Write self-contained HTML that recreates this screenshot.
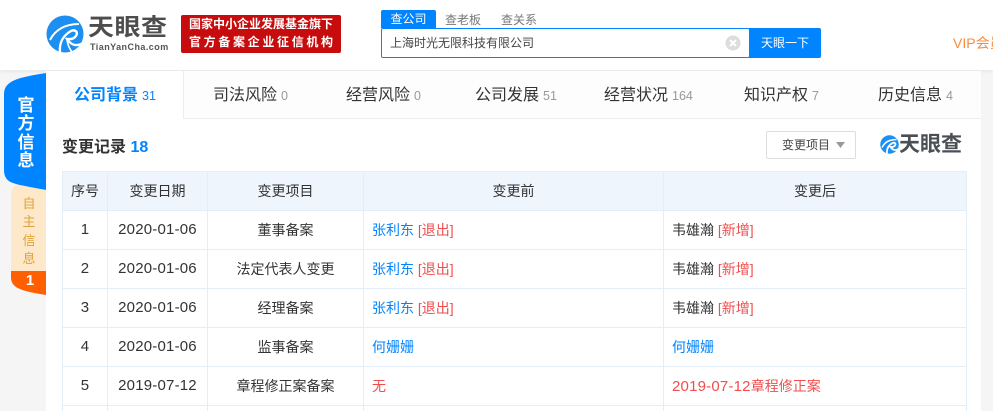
<!DOCTYPE html>
<html lang="zh">
<head>
<meta charset="utf-8">
<title>天眼查</title>
<style>
html,body{margin:0;padding:0;width:993px;height:411px;overflow:hidden}
body{background:#f5f5f5;font-family:"Liberation Sans","Noto Sans CJK SC",sans-serif;color:#333}
#page{position:absolute;left:0;top:0;width:993px;height:411px;overflow:hidden;background:#f5f5f5}
.a{position:absolute;white-space:nowrap}
#hd{left:0;top:0;width:993px;height:70px;background:#fff;box-shadow:0 1px 4px rgba(0,0,0,.08)}
#main{left:46px;top:71px;width:935px;height:340px;background:#fff}
.tab{top:73px;height:46px;line-height:46px;font-size:16px;color:#333}
.tab i{font-style:normal;font-size:12.500px;color:#999;margin-left:4px}
table{position:absolute;left:62px;top:171px;width:904px;border-collapse:collapse;table-layout:fixed;font-size:14px;color:#333}
td,th{border:1px solid #e4eef8;height:38px;padding:0;text-align:center;font-weight:normal;line-height:20px}
th{background:#eef5fd}
td.l{text-align:left;padding-left:8px}
.d{font-size:15px;letter-spacing:.2px}
.b{color:#0084ff;font-size:14px;letter-spacing:0}
.r{color:#f04d4d;font-size:14px;letter-spacing:0}
.rd{color:#f04d4d;font-size:15px;letter-spacing:.2px}
.rd span{font-size:14px;letter-spacing:0}
.v{position:absolute;top:406px;width:1px;height:5px;background:#e4eef8}
</style>
</head>
<body>
<div id="page">
<div class="a" id="hd"></div>
<svg class="a" style="left:46px;top:15px" width="38" height="38" viewBox="0 0 38 38">
<circle cx="19" cy="19" r="18.500" fill="#1c8ff0"/>
<path d="M4 25C9 15 19 9 33 9" fill="none" stroke="#fff" stroke-width="2"/>
<path d="M14 37C13 27 18 20 25 16C30 14 33 18 29 22C26 25 23 24 21 24C25 30 30 32 37 28" fill="none" stroke="#fff" stroke-width="2.400"/>
<path d="M21 25C22 31 24 35 27 38" fill="none" stroke="#fff" stroke-width="1.600"/>
</svg>
<div class="a" style="left:88px;top:13px;font-size:26px;line-height:28px;color:#4d4d4d;font-weight:bold;letter-spacing:.5px;transform:scaleY(.9);transform-origin:0 50%">天眼查</div>
<div class="a" style="left:90px;top:41px;font-size:9px;line-height:12px;color:#555;font-weight:bold;letter-spacing:.45px">TianYanCha.com</div>
<div class="a" style="left:181px;top:15px;width:160px;height:38px;background:#c60c0c;border-radius:2px;color:#fff;font-size:12px;line-height:19px;font-weight:bold">
<div class="a" style="left:8px;top:0">国家中小企业发展基金旗下</div>
<div class="a" style="left:8px;top:18px;letter-spacing:2.670px">官方备案企业征信机构</div>
</div>
<div class="a" style="left:381px;top:10px;width:55px;height:18px;background:#0084ff;border-radius:2px 2px 0 0;color:#fff;font-size:12px;line-height:18px;text-align:center">查公司</div>
<div class="a" style="left:433px;top:10px;width:60px;height:18px;color:#777;font-size:12px;line-height:20px;text-align:center">查老板</div>
<div class="a" style="left:489px;top:10px;width:60px;height:18px;color:#777;font-size:12px;line-height:20px;text-align:center">查关系</div>
<div class="a" style="left:380.500px;top:28px;width:367px;height:28px;border:1px solid #0084ff;border-radius:2px;background:#fff"></div>
<div class="a" style="left:390px;top:34px;font-size:12px;line-height:18px;color:#444">上海时光无限科技有限公司</div>
<svg class="a" style="left:725px;top:35px" width="16" height="16" viewBox="0 0 16 16"><circle cx="8" cy="8" r="7.500" fill="#ddd"/><path d="M5 5L11 11M11 5L5 11" stroke="#fff" stroke-width="2"/></svg>
<div class="a" style="left:749px;top:28px;width:72px;height:30px;background:#0084ff;border-radius:0 2px 2px 0;color:#fff;font-size:12px;line-height:30px;text-align:center">天眼一下</div>
<div class="a" style="left:953px;top:34px;width:40px;overflow:hidden;font-size:14px;line-height:18px;color:#f88d3c">VIP会员</div>

<div class="a" id="main"></div>
<div class="a" style="left:46px;top:71px;width:935px;height:47px;background:#fdfdfd;border-bottom:1px solid #eee"></div>
<div class="a" style="left:46px;top:71px;width:137px;height:48px;background:#fff;border-right:1px solid #eee"></div>
<div class="a tab" style="left:74px;color:#0084ff;font-weight:bold">公司背景<i style="color:#0084ff;font-weight:normal">31</i></div>
<div class="a tab" style="left:213px">司法风险<i>0</i></div>
<div class="a tab" style="left:346px">经营风险<i>0</i></div>
<div class="a tab" style="left:475px">公司发展<i>51</i></div>
<div class="a tab" style="left:604px">经营状况<i>164</i></div>
<div class="a tab" style="left:744px">知识产权<i>7</i></div>
<div class="a tab" style="left:878px">历史信息<i>4</i></div>

<svg class="a" style="left:4px;top:72px" width="42" height="225" viewBox="0 0 42 225">
<path d="M42 1C30 3 18 5 11 8C4 11 0 15 0 22V98C0 105 3 109 9 111C18 114 30 116 42 118Z" fill="#0084ff"/>
<path d="M42 118C30 116 22 114 15 113C10 113 7 117 7 122V206C18 216 30 220 42 223Z" fill="#fde9c9"/>
<path d="M7 199H42V223C30 221 18 219 12 215C8 212 7 209 7 205Z" fill="#ff5f00"/>
</svg>
<div class="a" style="left:15px;top:97px;width:22px;color:#fff;font-size:17px;line-height:18.300px;font-weight:bold;text-align:center;white-space:normal">官方信息</div>
<div class="a" style="left:20px;top:195px;width:18px;color:#e2a13c;font-size:13px;line-height:18.300px;text-align:center;white-space:normal">自主信息</div>
<div class="a" style="left:20px;top:271px;width:20px;color:#fff;font-size:15px;line-height:20px;font-weight:bold;text-align:center">1</div>

<div class="a" style="left:62px;top:137px;font-size:16px;line-height:22px;font-weight:bold;color:#333">变更记录 <span style="color:#0084ff">18</span></div>
<div class="a" style="left:766px;top:131px;width:88px;height:26px;border:1px solid #ddd;border-radius:2px;background:#fff;font-size:12px;line-height:26px;color:#444"><span style="margin-left:15px">变更项目</span></div>
<svg class="a" style="left:836px;top:142px" width="9" height="6" viewBox="0 0 9 6"><path d="M0 0H9L4.500 6Z" fill="#999"/></svg>
<svg class="a" style="left:880px;top:135px" width="19" height="19" viewBox="0 0 38 38">
<circle cx="19" cy="19" r="18.500" fill="#1c8ff0"/>
<path d="M14 37C13 27 18 20 25 16C30 14 33 18 29 22C26 25 23 24 21 24C25 30 30 32 37 28" fill="none" stroke="#fff" stroke-width="3.500"/>
<path d="M4 25C9 15 19 9 33 9" fill="none" stroke="#fff" stroke-width="3"/>
</svg>
<div class="a" style="left:899px;top:132px;font-size:21px;line-height:25px;color:#4a4f55;font-weight:bold">天眼查</div>

<table>
<colgroup><col style="width:45px"><col style="width:100px"><col style="width:156px"><col style="width:300px"><col style="width:303px"></colgroup>
<tr><th>序号</th><th>变更日期</th><th>变更项目</th><th>变更前</th><th>变更后</th></tr>
<tr><td class="d">1</td><td class="d">2020-01-06</td><td>董事备案</td><td class="l"><span class="b">张利东</span> <span class="r">[退出]</span></td><td class="l">韦雄瀚 <span class="r">[新增]</span></td></tr>
<tr><td class="d">2</td><td class="d">2020-01-06</td><td>法定代表人变更</td><td class="l"><span class="b">张利东</span> <span class="r">[退出]</span></td><td class="l">韦雄瀚 <span class="r">[新增]</span></td></tr>
<tr><td class="d">3</td><td class="d">2020-01-06</td><td>经理备案</td><td class="l"><span class="b">张利东</span> <span class="r">[退出]</span></td><td class="l">韦雄瀚 <span class="r">[新增]</span></td></tr>
<tr><td class="d">4</td><td class="d">2020-01-06</td><td>监事备案</td><td class="l"><span class="b">何姗姗</span></td><td class="l"><span class="b">何姗姗</span></td></tr>
<tr><td class="d">5</td><td class="d">2019-07-12</td><td>章程修正案备案</td><td class="l"><span class="r">无</span></td><td class="l rd">2019-07-12<span>章程修正案</span></td></tr>
</table>
<div class="v" style="left:62px"></div>
<div class="v" style="left:107px"></div>
<div class="v" style="left:207px"></div>
<div class="v" style="left:363px"></div>
<div class="v" style="left:663px"></div>
<div class="v" style="left:966px"></div>
</div>
</body>
</html>
